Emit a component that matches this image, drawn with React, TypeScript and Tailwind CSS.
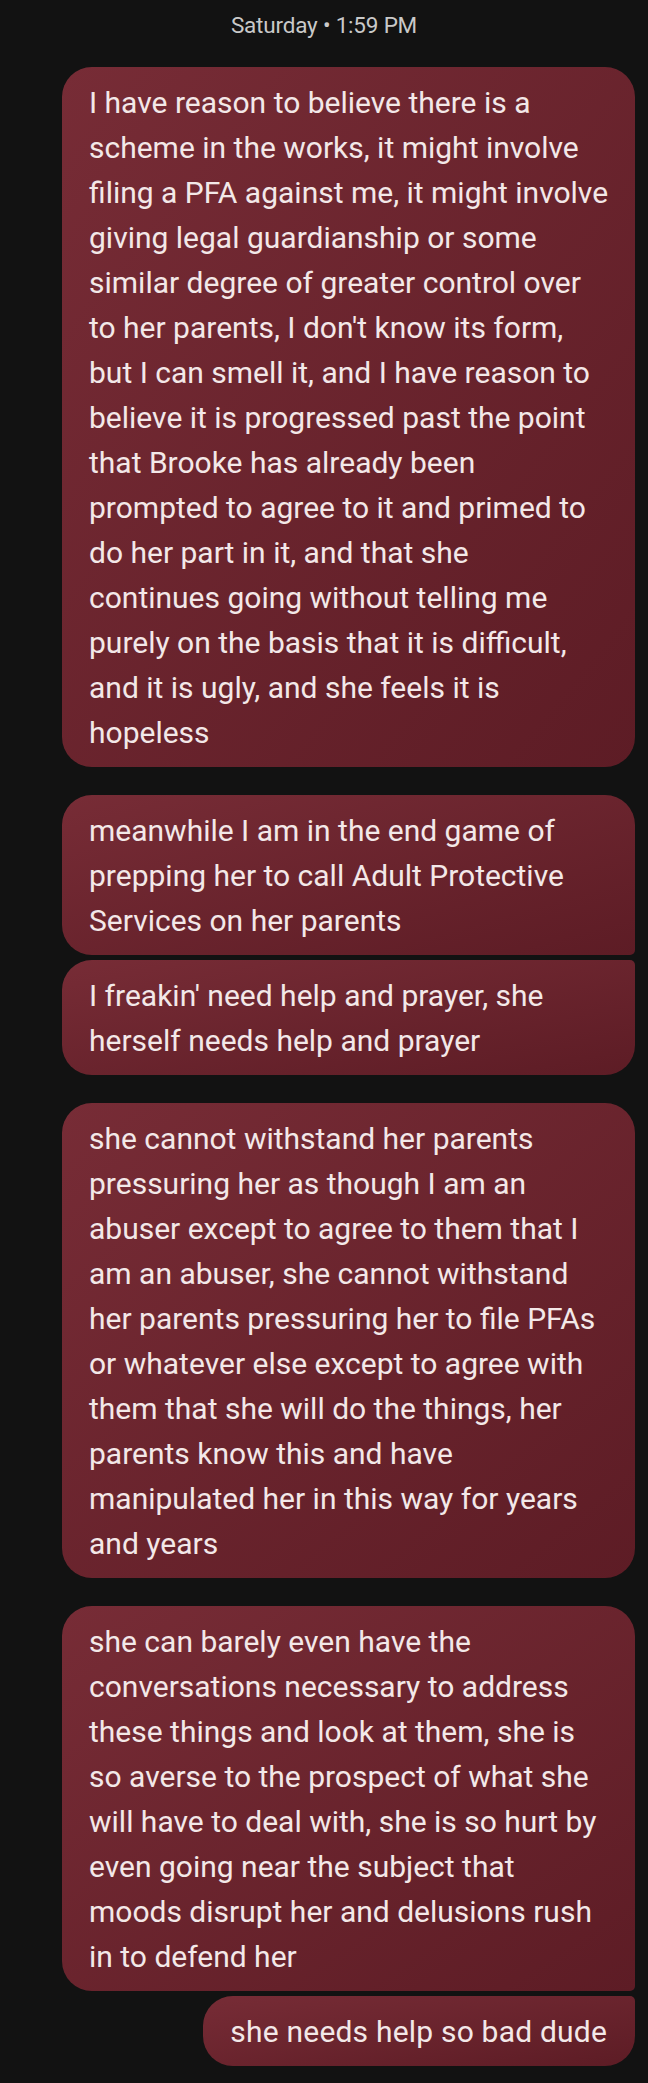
import React from "react";

type Msg = { lines: string[]; tr: boolean; br: boolean; full: boolean; gapTop: number };

const msgs: Msg[] = [
  {
    lines: [
      "I have reason to believe there is a",
      "scheme in the works, it might involve",
      "filing a PFA against me, it might involve",
      "giving legal guardianship or some",
      "similar degree of greater control over",
      "to her parents, I don't know its form,",
      "but I can smell it, and I have reason to",
      "believe it is progressed past the point",
      "that Brooke has already been",
      "prompted to agree to it and primed to",
      "do her part in it, and that she",
      "continues going without telling me",
      "purely on the basis that it is difficult,",
      "and it is ugly, and she feels it is",
      "hopeless",
    ],
    tr: true,
    br: true,
    full: true,
    gapTop: 0,
  },
  {
    lines: [
      "meanwhile I am in the end game of",
      "prepping her to call Adult Protective",
      "Services on her parents",
    ],
    tr: true,
    br: false,
    full: true,
    gapTop: 28,
  },
  {
    lines: ["I freakin' need help and prayer, she", "herself needs help and prayer"],
    tr: false,
    br: true,
    full: true,
    gapTop: 5,
  },
  {
    lines: [
      "she cannot withstand her parents",
      "pressuring her as though I am an",
      "abuser except to agree to them that I",
      "am an abuser, she cannot withstand",
      "her parents pressuring her to file PFAs",
      "or whatever else except to agree with",
      "them that she will do the things, her",
      "parents know this and have",
      "manipulated her in this way for years",
      "and years",
    ],
    tr: true,
    br: true,
    full: true,
    gapTop: 28,
  },
  {
    lines: [
      "she can barely even have the",
      "conversations necessary to address",
      "these things and look at them, she is",
      "so averse to the prospect of what she",
      "will have to deal with, she is so hurt by",
      "even going near the subject that",
      "moods disrupt her and delusions rush",
      "in to defend her",
    ],
    tr: true,
    br: false,
    full: true,
    gapTop: 28,
  },
  {
    lines: ["she needs help so bad dude"],
    tr: false,
    br: true,
    full: false,
    gapTop: 5,
  },
];

function Bubble({ m }: { m: Msg }) {
  const cls = [
    "bg-gradient-to-br from-[#772c36] to-[#5d1c25] text-[#f3e8e8] text-[30px] leading-[45px] pt-[12.5px] pb-[12.5px] pl-[27px] rounded-l-[30px]",
    m.tr ? "rounded-tr-[30px]" : "rounded-tr-[5px]",
    m.br ? "rounded-br-[30px]" : "rounded-br-[5px]",
    m.full ? "w-[573px] pr-[26px]" : "pr-[28px] tracking-[0.2px]",
    m.gapTop === 28 ? "mt-[28px]" : m.gapTop === 5 ? "mt-[5px]" : "",
  ].join(" ");
  return (
    <div className={cls}>
      {m.lines.map((l, i) => (
        <div key={i} className="whitespace-nowrap">
          {l}
        </div>
      ))}
    </div>
  );
}

export default function App() {
  return (
    <div
      className="w-[648px] min-h-[2083px] bg-[#121212] flex flex-col items-end pr-[13px] pt-[10px] pb-[17px]"
      style={{ fontFamily: "Roboto, 'Noto Sans', sans-serif" }}
    >
      <div className="w-full pl-[13px] text-center text-[22.5px] leading-[30px] text-[#c9c9c9] tracking-[-0.2px]">
        Saturday • 1:59 PM
      </div>
      <div className="mt-[27px] flex flex-col items-end">
        {msgs.map((m, i) => (
          <Bubble key={i} m={m} />
        ))}
      </div>
    </div>
  );
}
